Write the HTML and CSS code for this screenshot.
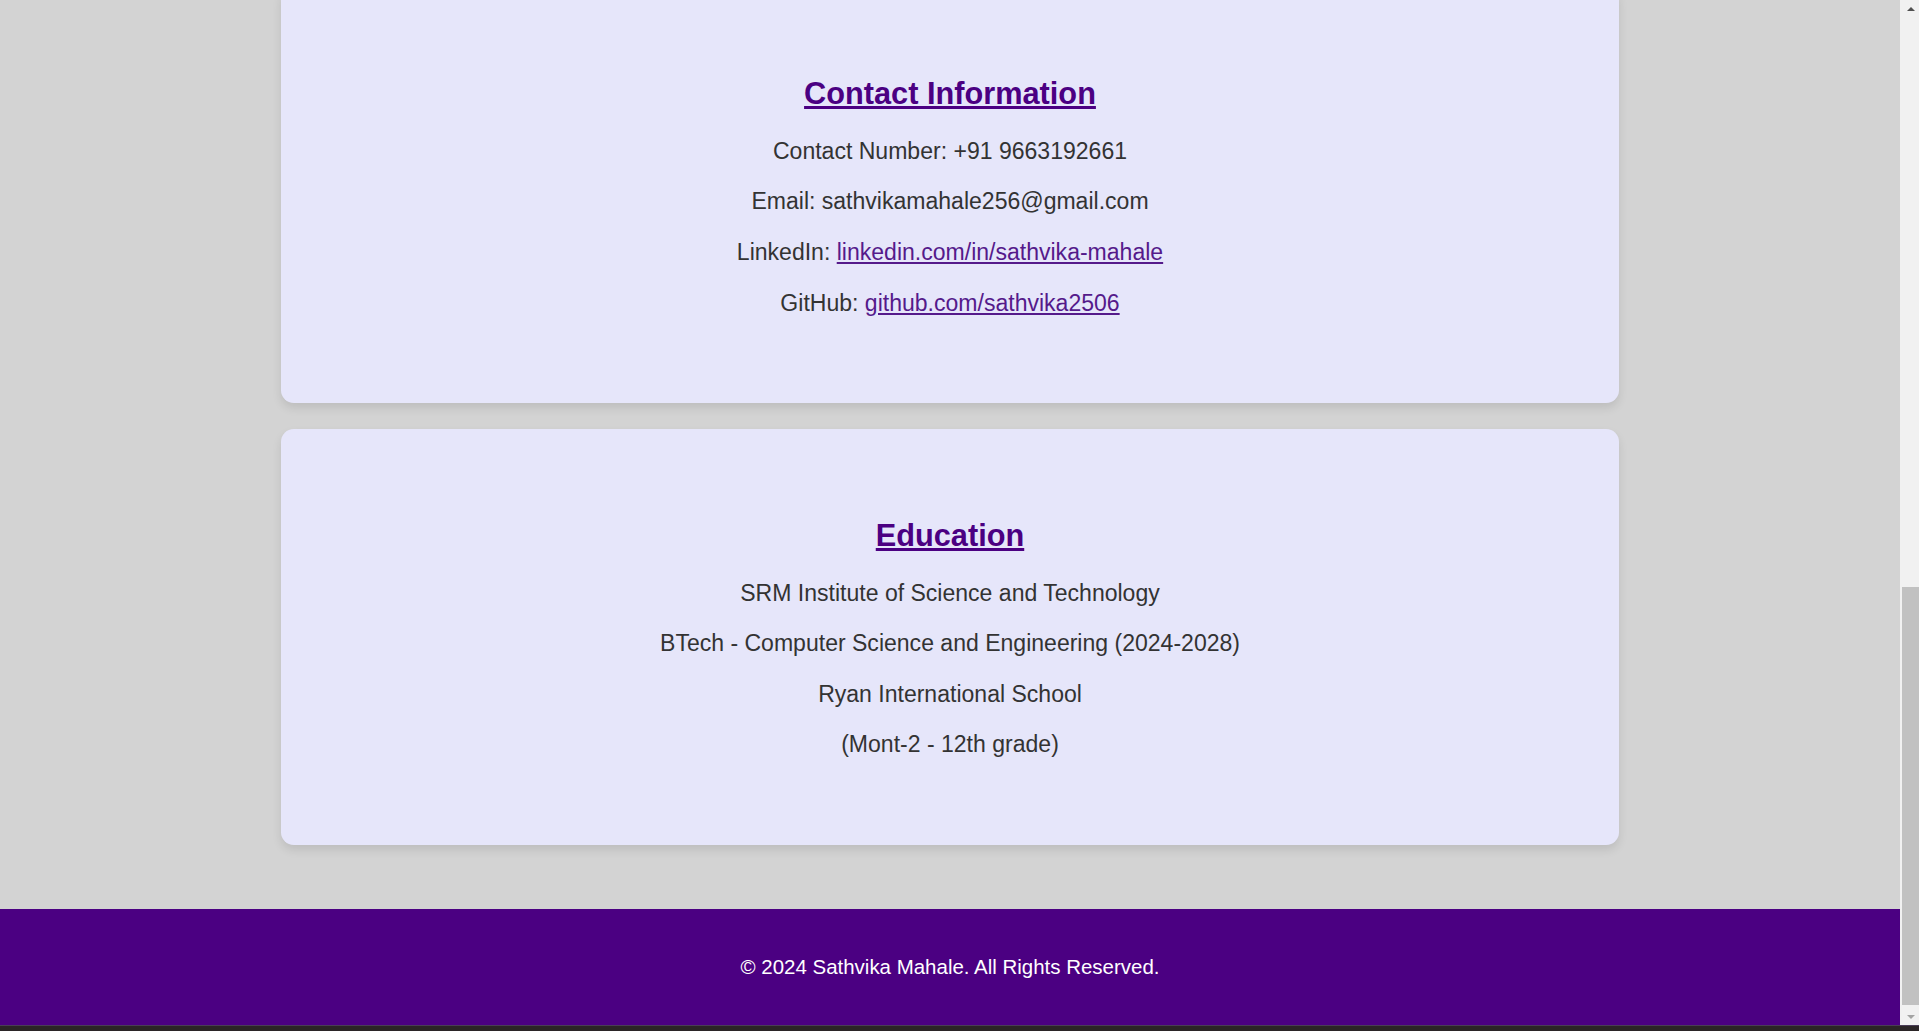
FILE: index.html
```html
<!DOCTYPE html>
<html lang="en">
<head>
<meta charset="utf-8">
<title>Sathvika Mahale</title>
<link rel="stylesheet" href="styles.css">
</head>
<body>
<div class="window">
  <div class="viewport">
    <div class="page">
      <main class="main">
        <section class="card">
          <h2 class="card-title">Contact Information</h2>
          <p>Contact Number: +91 9663192661</p>
          <p>Email: sathvikamahale256@gmail.com</p>
          <p>LinkedIn: <a class="link" href="#">linkedin.com/in/sathvika-mahale</a></p>
          <p>GitHub: <a class="link" href="#">github.com/sathvika2506</a></p>
        </section>
        <section class="card">
          <h2 class="card-title">Education</h2>
          <p>SRM Institute of Science and Technology</p>
          <p>BTech - Computer Science and Engineering (2024-2028)</p>
          <p>Ryan International School</p>
          <p>(Mont-2 - 12th grade)</p>
        </section>
      </main>
      <footer class="footer">
        <p>© 2024 Sathvika Mahale. All Rights Reserved.</p>
      </footer>
    </div>
    <div class="scrollbar">
      <div class="sb-btn"><span class="arrow-up"></span></div>
      <div class="sb-track"><div class="sb-thumb"></div></div>
      <div class="sb-btn"><span class="arrow-down"></span></div>
    </div>
  </div>
  <div class="taskbar"></div>
</div>
</body>
</html>
```

FILE: styles.css
```css
* {
  box-sizing: border-box;
}

html, body {
  margin: 0;
  padding: 0;
  height: 100%;
  overflow: hidden;
}

body {
  font-family: "Liberation Sans", Arial, sans-serif;
  background: #d3d3d3;
  color: #333;
}

.window {
  height: 1031px;
  display: flex;
  flex-direction: column;
}

.viewport {
  height: 1025px;
  display: flex;
}

.page {
  width: 1900px;
  height: 1025px;
  overflow: hidden;
  display: flex;
  flex-direction: column;
  justify-content: flex-end;
  background: #d3d3d3;
}

.main {
  padding-bottom: 38.5px;
  flex-shrink: 0;
}

.card {
  width: 1338px;
  margin: 0 auto 25.6px;
  background: #e6e6fa;
  border-radius: 12.8px;
  box-shadow: 0 5px 10px rgba(0, 0, 0, 0.1);
  padding: 64px 40px 63px;
  text-align: center;
}

.card-title {
  font-size: 30.72px;
  font-weight: bold;
  color: #4b0082;
  text-decoration: underline;
  margin: 25.5px 0;
  line-height: normal;
}

.card p {
  font-size: 23.04px;
  line-height: 27.5px;
  margin: 23.04px 0;
  color: #333;
}

.link {
  color: #551a8b;
  text-decoration: underline;
}

.footer {
  flex-shrink: 0;
  background: #4b0082;
  color: #fff;
  text-align: center;
  padding: 25.6px 0;
}

.footer p {
  margin: 20.48px 0;
  font-size: 20.48px;
  line-height: normal;
}

.scrollbar {
  width: 19px;
  height: 1025px;
  background: #f1f1f1;
  display: flex;
  flex-direction: column;
}

.sb-btn {
  height: 17px;
  display: flex;
  align-items: center;
  justify-content: center;
  padding-left: 2px;
}

.arrow-up {
  width: 0;
  height: 0;
  border-left: 4px solid transparent;
  border-right: 4px solid transparent;
  border-bottom: 4px solid #505050;
}

.arrow-down {
  width: 0;
  height: 0;
  border-left: 4px solid transparent;
  border-right: 4px solid transparent;
  border-top: 4px solid #a3a3a3;
}

.sb-track {
  flex: 1;
  display: flex;
  flex-direction: column;
  justify-content: flex-end;
  padding: 0 0 3px 2px;
}

.sb-thumb {
  height: 418px;
  background: #c1c1c1;
}

.taskbar {
  height: 6px;
  background: #2b2527;
  border-top: 1px solid #4a3d57;
}
```
